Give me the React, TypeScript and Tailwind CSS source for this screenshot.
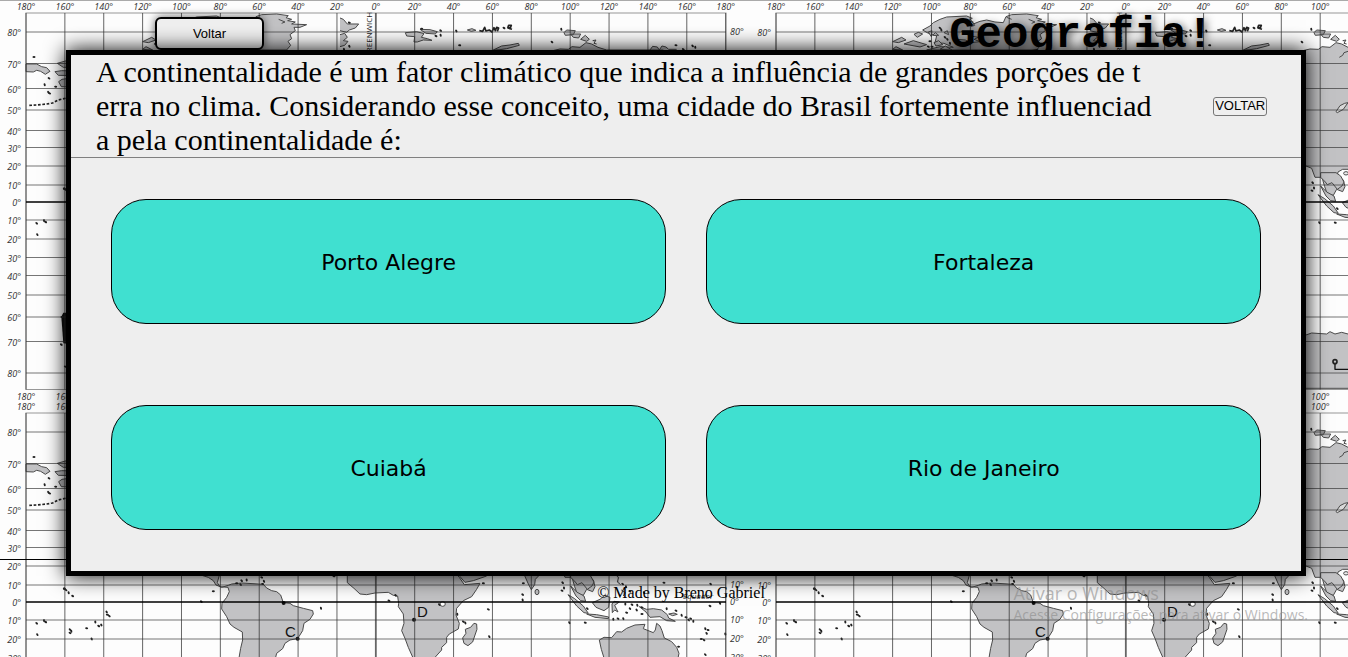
import React from "react";

const TILE_W = 750;
const TILE_H = 400;

const longitudes = [180, 160, 140, 120, 100, 80, 60, 40, 20, 0, 20, 40, 60, 80, 100, 120, 140, 160, 180];

const latitudes: [number, number][] = [
  [80, 32], [70, 63.5], [60, 88.5], [50, 110], [40, 130.5], [30, 147.5], [20, 166], [10, 185], [0, 202],
  [10, 220], [20, 239], [30, 257.5], [40, 275.5], [50, 295], [60, 317], [70, 341.5], [80, 373],
];

function Dots({ at, r = 3 }: { at: [number, number][]; r?: number }) {
  return (
    <g fill="#222" stroke="none">
      {at.map(([x, y], i) => (
        <ellipse key={i} cx={x} cy={y} rx={r + 1.6} ry={r} transform={`rotate(${(i * 37) % 90} ${x} ${y})`} />
      ))}
    </g>
  );
}

function MapTile() {
  return (
    <g>
      <g fill="#c2c2c4" stroke="#4a4a4a" strokeWidth={3} strokeLinejoin="round">
        {/* Alaska and Siberia tip */}
        <g transform="scale(.3333)">
          <path d="M78 192L110 192L125 200L140 203L150 214L136 223L122 214L110 211L100 216L78 215Z" />
          <path d="M172 190L200 182L240 180V202H190ZM165 215L185 212L230 213V227L175 226ZM176 245L186 238L230 232V262L184 260Z" />
          <path d="M88 316L112 315L140 312L158 309L175 300L200 294" fill="none" strokeDasharray="8 5" stroke="#222" strokeWidth={5} />
          <Dots at={[[102, 171], [147, 235], [134, 254], [149, 280], [145, 277], [167, 260], [110, 670], [132, 662], [137, 666], [112, 704]]} />
          <path d="M184 950L190 938H230V1035L190 1030Z" fill="#111" stroke="none" />
          <Dots at={[[186, 951], [184, 1034], [193, 566], [196, 1100]]} />
        </g>
        {/* Greenland and the Arctic islands */}
        <g transform="translate(-10 0) scale(.3333)">
          <path d="M580 68L600 58L620 51L680 48L697 55L684 62L700 66L690 76L720 64L740 60L765 66L790 68L798 50L815 44L860 42L895 47L888 53L905 58L893 62L916 66L905 72L950 74L930 82L912 82L916 92L900 104L905 116L894 124L902 136L890 150H560L600 140L640 142L612 130L585 128L590 108L565 100L548 90L570 78Z" />
          <path d="M664 94L690 108L715 112L702 118L720 125L690 128L676 120L650 118" fill="#e9e9e9" />
          <path d="M800 52L815 58M866 58L885 66L875 70M690 56L704 76L692 80" fill="none" />
        </g>
        <g transform="translate(110 0) scale(.3333)">
          <path d="M98 125L125 112L138 120L115 128ZM132 132L160 122L200 134L180 141ZM98 148L108 140L128 150ZM162 103L175 97L188 102L172 112ZM222 128L236 122L248 134L228 138ZM218 106L226 98L236 106ZM205 96L216 92L214 110ZM252 98L262 92L266 104ZM240 148L256 138L276 150Z" />
          <Dots at={[[210, 124], [240, 84], [244, 90], [205, 140], [262, 118], [216, 140], [255, 112], [270, 130]]} />
        </g>
        {/* Svalbard, Novaya Zemlya and northern Siberia */}
        <g transform="translate(340 0) scale(.3333)">
          <path d="M196 98L230 95L252 101L244 112L262 116L276 121L250 120L232 126L222 126L224 110L200 108ZM240 88L270 89L292 95L286 102L258 100ZM382 90L396 86L408 91L394 94Z" />
          <path d="M460 150L485 138L510 135L535 130L538 136L500 146L480 149Z" />
          <path d="M418 92L428 94L434 82L438 93L448 90L456 96L462 83L466 92L470 82L476 84L472 94" fill="none" strokeWidth={5} stroke="#222" />
          <path d="M503 84L506 76L514 76L512 82L504 84L516 88" fill="none" strokeWidth={5} stroke="#222" />
          <path d="M672 98L680 90L706 92L700 104L676 106ZM692 102L722 102L716 114L700 112ZM722 118L736 106L748 118L740 124ZM758 122L768 120L762 130L770 132" />
          <path d="M930 150L938 139L952 141L958 150L966 138L978 141L986 148L1010 148" />
          <path d="M0 54L10 58L22 72L56 72L46 84L28 90L20 97L0 92M0 104L14 100L22 112L10 122L24 124L14 136L0 140" />
          <Dots at={[[245, 86], [302, 92], [302, 106], [288, 108], [349, 93], [359, 136], [636, 126], [664, 88], [492, 84], [28, 139], [1008, 136], [1058, 138], [1066, 142], [1030, 148], [12, 148], [28, 68]]} />
        </g>
        {/* Asia */}
        <g transform="translate(450 40) scale(.3333)">
          <path d="M300 34L330 27L355 28L366 20L390 22L408 8L425 12L444 22L470 30H640V330H480L444 388L428 388L414 396L412 408L430 420L435 440L428 455L410 448L400 466L382 462L374 440L366 412L345 412L335 385L318 378H240V200Z" />
          <path d="M418 52L428 46L432 38L444 34" fill="none" />
          <path d="M408 215L420 197L434 190L444 188L430 208L412 218Z" fill="#d9d9d9" />
          <ellipse cx="438" cy="400" rx="7" ry="5" fill="#eee" />
        </g>
        {/* Antarctica */}
        <g transform="translate(450 300) scale(.3333)">
          <path d="M200 108L318 105L335 99L380 102L390 95L405 102L425 97L444 102L560 98V265H200Z" />
          <circle cx="405" cy="185" r="6" fill="none" strokeWidth={5} stroke="#222" />
          <path d="M405 192V208H460" fill="none" stroke="#111" strokeWidth={4} />
        </g>
        {/* South America, Africa and Madagascar */}
        <g transform="translate(130 160) scale(.3333)">
          <path d="M190 38L235 52L250 62L258 75L275 82L295 76L305 72L335 69L385 72L400 73L410 84L425 92L440 95L452 105L460 128L480 130L490 137L520 145L548 152L550 162L540 178L522 190L518 212L508 228L502 236L480 240L465 250L458 266L440 280L435 300H326L332 265L338 240L337 216L312 202L300 192L290 170L275 147L276 130L290 112L298 95L294 82L270 80L262 68L270 38Z" />
          <path d="M652 38V68L672 85L690 102L710 104L735 99L775 97L790 106L803 108L806 130L805 140L820 162L822 190L815 212L825 235L835 262L852 300H908L935 270L935 262L950 248L950 232L958 222L985 207L988 190L978 165L980 145L1000 122L1025 110L1040 88L1050 70L1003 74L988 52L975 38Z" />
          <path d="M980 38L1005 67L1030 62L1070 48V38Z" />
          <path d="M1032 190L1040 192L1041 208L1028 246L1014 257L1002 250L998 234L1008 220L1006 208L1022 202Z" />
          <ellipse cx="938" cy="132" rx="8" ry="7" fill="#fff" />
          <Dots at={[[250, 94], [214, 125], [573, 145], [777, 122], [797, 106], [320, 70], [335, 62], [350, 60], [395, 52], [402, 64], [612, 49], [928, 134], [982, 163], [1000, 185], [1006, 189], [398, 72], [332, 74]]} />
          <g fill="#111" stroke="none">
            <circle cx="461" cy="129" r="6" />
            <circle cx="503" cy="236" r="6" />
            <circle cx="852" cy="179" r="6" />
          </g>
        </g>
        {/* India, Indonesia and Australia */}
        <g transform="translate(480 160) scale(.3333)">
          <path d="M130 38L145 72L154 89L164 74L166 58L185 38Z" />
          <ellipse cx="171" cy="96" rx="6" ry="8" />
          <path d="M272 52L286 66L292 74L306 68L322 88L336 78L342 66L332 48L318 38H272Z" />
          <path d="M272 78L290 96L312 108L317 124L302 122L288 108ZM264 104L284 116L310 138L325 160L312 158L290 138ZM320 162L350 164L386 171L385 176L345 172Z" />
          <path d="M337 128L360 118L374 106L390 112L386 142L372 152L348 142ZM396 132L402 124L418 126L404 136L414 156L404 150L397 158ZM408 45L416 52L412 66L422 74M424 90L436 98L430 108" />
          <path d="M478 140L500 148L520 146L545 150L562 164L566 174L586 184L560 182L540 170L510 172L498 156ZM566 162L582 159L592 163L578 167Z" />
          <path d="M358 240L372 232L395 233L410 215L425 216L440 205L465 195L495 193L490 206L520 218L526 210L530 190L540 198L546 212L553 234L575 245L590 262L597 280L593 300H374L364 268Z" />
          <Dots
            at={[[130, 70], [128, 104], [128, 120], [25, 148], [28, 230], [10, 70], [248, 68], [252, 84], [246, 92], [268, 188], [316, 188], [322, 146], [400, 178], [414, 176], [430, 176], [440, 158], [450, 146], [436, 132], [456, 134], [472, 136], [486, 142], [470, 150], [486, 162], [428, 72], [438, 80], [450, 94], [492, 98], [552, 68], [692, 72], [560, 146], [588, 152], [605, 166], [618, 172], [626, 180], [640, 184], [632, 176], [676, 206], [684, 210], [680, 220], [664, 237], [672, 240], [736, 222], [690, 138], [720, 130], [596, 260], [676, 284]]}
          />
        </g>
        {/* Pacific islands along the left edge */}
        <g transform="translate(0 160) scale(.3333)">
          <Dots at={[[193, 86], [198, 90], [206, 98], [218, 108], [320, 156], [322, 164], [328, 168], [286, 186], [296, 198], [304, 195], [260, 205], [210, 209], [214, 214], [210, 219], [275, 237]]} />
        </g>
      </g>

      <g stroke="#333" strokeOpacity={0.75} fill="none">
        <rect x={26} y={13} width={700} height={376.5} strokeOpacity={0.5} />
        {longitudes.map((d, i) => (
          <line key={i} x1={26 + i * 38.87} x2={26 + i * 38.87} y1={13} y2={389.5} strokeWidth={d === 0 ? 1.8 : 1} />
        ))}
        {latitudes.map(([d, y], i) => (
          <line key={i} x1={26} x2={726} y1={y} y2={y} strokeWidth={d === 0 ? 1.8 : 0.9} stroke={d === 0 ? "#000" : "#333"} />
        ))}
      </g>

      <g className="font-['Open_Sans',sans-serif] text-[9px] font-medium italic" fill="#333">
        {longitudes.map((d, i) => (
          <g key={i} textAnchor="middle">
            <text x={26 + i * 38.87} y={10}>{d}°</text>
            <text x={26 + i * 38.87} y={400}>{d}°</text>
          </g>
        ))}
        {latitudes.map(([d, y], i) => (
          <g key={i}>
            <text x={21} y={y + 4} textAnchor="end">{d}°</text>
            <text x={730} y={y + 3}>{d}°</text>
          </g>
        ))}
        <text x={683} y={199} className="text-[8px]">Equador</text>
      </g>
      <text transform="translate(372 58) rotate(-90)" className="font-['Open_Sans',sans-serif] text-[8px]" fill="#222">
        GREENWICH
      </text>
      <g className="font-['Liberation_Sans',sans-serif] text-[15px]" fill="#111">
        <text x={285} y={237}>C</text>
        <text x={417} y={217}>D</text>
      </g>
    </g>
  );
}

function MapBackground() {
  return (
    <svg className="absolute inset-0 h-full w-full" aria-hidden="true">
      {[0, 1].map((row) =>
        [0, 1].map((col) => (
          <g key={`${row}-${col}`} transform={`translate(${col * TILE_W} ${row * TILE_H})`}>
            <MapTile />
          </g>
        )),
      )}
    </svg>
  );
}

const question =
  "A continentalidade é um fator climático que indica a influência de grandes porções de terra no clima. Considerando esse conceito, uma cidade do Brasil fortemente influenciada pela continentalidade é:";

const answers = ["Porto Alegre", "Fortaleza", "Cuiabá", "Rio de Janeiro"];

export default function App() {
  return (
    <div className="relative min-h-screen overflow-hidden bg-[#fdfdfd] text-black">
      <MapBackground />

      <div className="relative border-t border-b border-t-[#aaa] border-b-black">
        <header className="flex h-[49px] items-start justify-between pr-[10%] pl-[11.5%]">
          <button
            type="button"
            className="mt-4 h-[33px] w-[109px] rounded-md border-2 border-black bg-[#efefef] font-['Liberation_Sans',sans-serif] text-[13px] shadow-[0_0_10px_rgba(0,0,0,0.6)]"
          >
            Voltar
          </button>
          <h1 className="mt-2 font-['Liberation_Mono',monospace] text-[44px] leading-[52px] font-bold [text-shadow:2px_2px_10px_rgba(0,0,0,0.7)]">
            Geografia!
          </h1>
        </header>

        <main className="relative mr-[3.1%] -mb-[17px] ml-[4.9%] border-[5px] border-black bg-[#eee] shadow-[0_0_20px_#000]">
          <div className="flex items-center justify-between border-b border-[#808080] pr-[34px] pl-[25px]">
            <p className="max-w-[1057px] font-['Liberation_Serif',serif] text-[30px] leading-[34px] break-all">{question}</p>
            <button
              type="button"
              className="h-[19px] shrink-0 rounded-[3px] border border-[#767676] bg-[#efefef] px-px font-['Liberation_Sans',sans-serif] text-[13px] leading-4"
            >
              VOLTAR
            </button>
          </div>
          <div className="grid grid-cols-2 gap-x-10 gap-y-[81px] px-10 py-[41px]">
            {answers.map((answer) => (
              <button
                key={answer}
                type="button"
                className="h-[125px] rounded-[35px] border border-black bg-[#40e0d0] pt-0.5 font-['DejaVu_Sans',sans-serif] text-[22px]"
              >
                {answer}
              </button>
            ))}
          </div>
        </main>
      </div>

      <footer className="relative mt-6 pl-3.5 text-center font-['Liberation_Serif',serif] text-[16px] leading-[18px]">
        © Made by Breno Gabriel
      </footer>

      <aside className="absolute right-10 bottom-8 font-['Open_Sans',sans-serif] text-[#8a8a8a]/60">
        <p className="text-[18px] leading-6">Ativar o Windows</p>
        <p className="text-[14px] leading-5">Acesse Configurações para ativar o Windows.</p>
      </aside>
    </div>
  );
}
